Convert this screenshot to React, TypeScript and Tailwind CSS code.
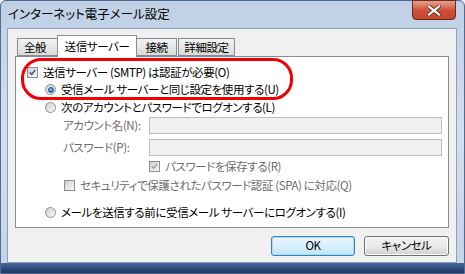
import React from "react";

function Check({ checked, disabled }: { checked?: boolean; disabled?: boolean }) {
  return (
    <span className="w-[11px] h-[11px] shrink-0 border border-[#8e8f8f] bg-gradient-to-br from-[#d0d0d0] to-[#f7f7f7] p-[1px] flex items-center justify-center">
      <span className="w-full h-full flex items-center justify-center">
        {checked && (
          <svg width="9" height="9" viewBox="0 0 9 9">
            <path d="M1 4.3 L3.5 7 L8 1.2" fill="none" stroke={disabled ? "#a0a0a0" : "#2f4a8a"} strokeWidth="1.8" />
          </svg>
        )}
      </span>
    </span>
  );
}

function Radio({ checked }: { checked?: boolean }) {
  return (
    <span className="w-[11px] h-[11px] shrink-0 rounded-full border border-[#8e8f8f] bg-gradient-to-br from-[#cfcfcf] to-[#fbfbfb] flex items-center justify-center">
      {checked && <span className="w-[6px] h-[6px] rounded-full border border-[#1b4f86] bg-[radial-gradient(circle_at_40%_35%,#a6dcff,#1a6dc0_70%)]" />}
    </span>
  );
}

export default function App() {
  return (
    <div className="w-[465px] h-[274px] overflow-hidden bg-[#f0f0f0] font-['Noto_Sans_CJK_JP',sans-serif] [font-feature-settings:'palt'] text-[11.5px] tracking-[-0.4px] leading-none text-black">
      <div className="relative w-full h-full rounded-t-[6px] bg-gradient-to-b from-[#bfd0e5] via-[#d3dfec] to-[#c3d3e6] border border-[#4d6a95] flex flex-col">
        {/* title bar */}
        <div className="h-[27px] flex items-center pl-[7px] text-[12.5px] tracking-normal text-black">インターネット電子メール設定</div>
        <div className="absolute top-[-1px] right-[8px] w-[44px] h-[20px] rounded-b-[4px] border border-[#6b2a1e] bg-gradient-to-b from-[#e7a190] via-[#d0503a] to-[#c2452c] flex items-center justify-center">
          <svg width="14" height="11" viewBox="0 0 14 11">
            <path d="M2 1.5 L12 9.5 M12 1.5 L2 9.5" stroke="#5a2a24" strokeWidth="3.6" strokeLinecap="square" />
            <path d="M2 1.5 L12 9.5 M12 1.5 L2 9.5" stroke="#ffffff" strokeWidth="2.2" strokeLinecap="square" />
          </svg>
        </div>
        {/* client */}
        <div className="mx-[6px] w-[450px] h-[235px] bg-[#f0f0f0] border border-[#8aa0bf] flex flex-col pl-[7px] pt-[6px]">
          {/* tabs */}
          <div className="flex items-end h-[21px] pl-[2px]">
            <div className="w-[40px] h-[18px] pl-[6px] border border-[#898c95] border-r-0 bg-gradient-to-b from-[#f2f2f2] to-[#dbdbdb] flex items-center pt-[1px]">全般</div>
            <div className="w-[80px] h-[22px] -mb-[1px] border border-[#898c95] border-b-0 bg-white flex items-center justify-center relative z-10">送信サーバー</div>
            <div className="w-[40px] h-[18px] border border-[#898c95] border-l-0 bg-gradient-to-b from-[#f2f2f2] to-[#dbdbdb] flex items-center justify-center pt-[1px]">接続</div>
            <div className="w-[57px] h-[18px] ml-[1px] border border-[#898c95] bg-gradient-to-b from-[#f2f2f2] to-[#dbdbdb] flex items-center justify-center pt-[1px]">詳細設定</div>
          </div>
          {/* panel */}
          <div className="w-[434px] h-[172px] bg-white border border-[#898c95] flex flex-col pt-[8px]">
            <div className="flex items-center gap-[5px] pl-[11px] h-[15px]">
              <Check checked />
              <span>送信サーバー (SMTP) は認証が必要(O)</span>
            </div>
            <div className="flex items-center gap-[5px] pl-[29px] h-[15px] mt-[2px]">
              <Radio checked />
              <span>受信メール サーバーと同じ設定を使用する(U)</span>
            </div>
            <div className="flex items-center gap-[5px] pl-[29px] h-[15px] mt-[3px]">
              <Radio />
              <span>次のアカウントとパスワードでログオンする(L)</span>
            </div>
            <div className="flex items-center pl-[47px] h-[17px] mt-[2px] text-[#6d6d6d]">
              <span className="w-[86px] whitespace-nowrap">アカウント名(N):</span>
              <span className="w-[293px] h-[17px] border border-[#b3c0d1] bg-[#f0f0f0]" />
            </div>
            <div className="flex items-center pl-[47px] h-[17px] mt-[5px] text-[#6d6d6d]">
              <span className="w-[86px] whitespace-nowrap">パスワード(P):</span>
              <span className="w-[293px] h-[17px] border border-[#b3c0d1] bg-[#f0f0f0]" />
            </div>
            <div className="flex items-center gap-[5px] pl-[133px] h-[15px] mt-[3px] text-[#6d6d6d]">
              <Check checked disabled />
              <span>パスワードを保存する(R)</span>
            </div>
            <div className="flex items-center gap-[5px] pl-[48px] h-[15px] mt-[4px] text-[#6d6d6d]">
              <Check />
              <span>セキュリティで保護されたパスワード認証 (SPA) に対応(Q)</span>
            </div>
            <div className="flex items-center gap-[5px] pl-[29px] h-[15px] mt-[12px]">
              <Radio />
              <span>メールを送信する前に受信メール サーバーにログオンする(I)</span>
            </div>
          </div>
          {/* buttons */}
          <div className="flex justify-end gap-[9px] mt-[8px] w-[434px]">
            <div className="w-[84px] h-[20px] rounded-[3px] border border-[#3c7fb1] bg-gradient-to-b from-[#eaf6fd] via-[#d9f0fc] to-[#bee6fd] shadow-[inset_0_0_0_1px_#a8ddf8] flex items-center justify-center">OK</div>
            <div className="w-[85px] h-[20px] rounded-[3px] border border-[#707070] bg-gradient-to-b from-[#f2f2f2] via-[#ebebeb] to-[#cfcfcf] shadow-[inset_0_0_0_1px_#fcfcfc] flex items-center justify-center">キャンセル</div>
          </div>
        </div>
        <div className="flex-1 bg-gradient-to-b from-[#4a6a9b] to-[#1c3563]" />
        {/* red annotation */}
        <div className="absolute left-[20px] top-[57px] w-[272px] h-[42px] rounded-[20px] border-[3px] border-[#f00000]" />
      </div>
    </div>
  );
}
